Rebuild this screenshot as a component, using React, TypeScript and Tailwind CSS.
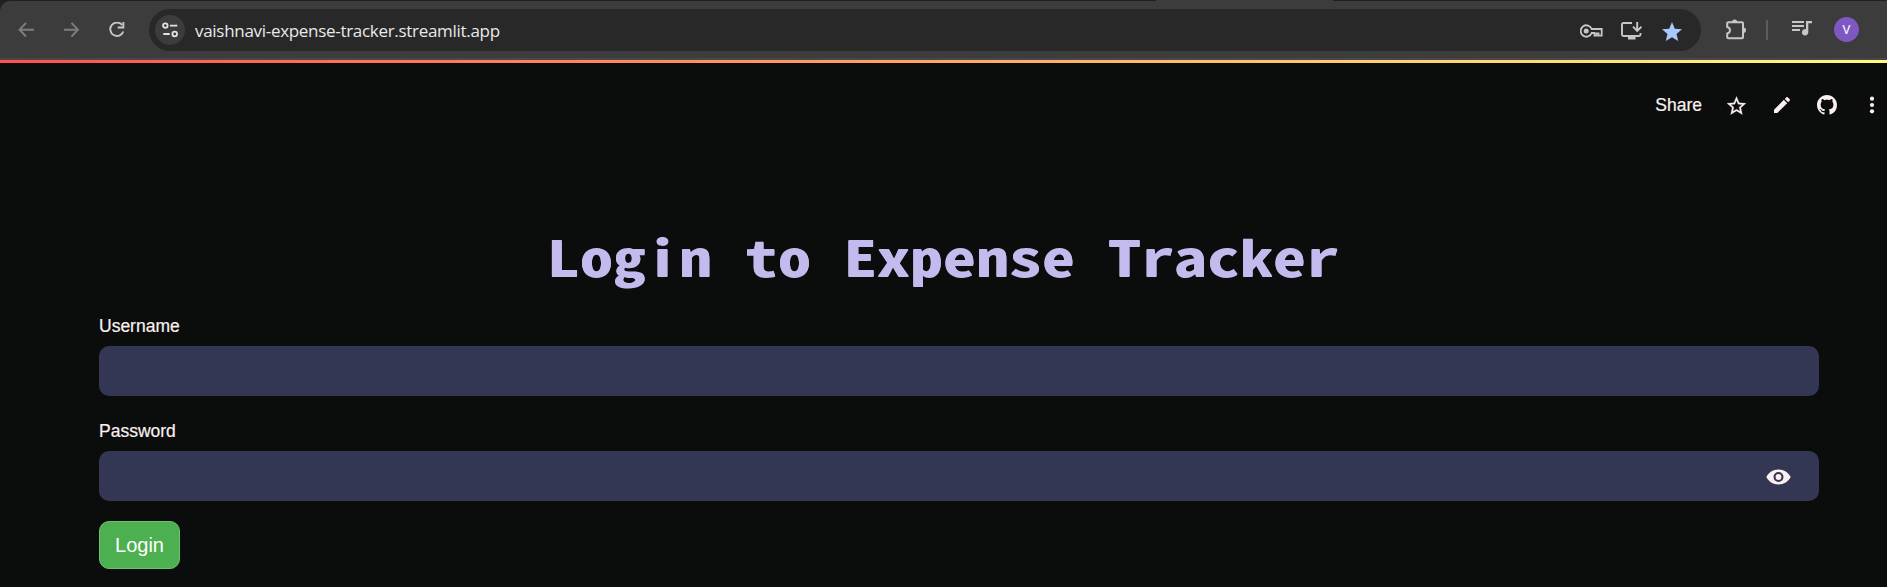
import type { ReactNode } from "react";

type IconProps = { className: string; box: string; children: ReactNode };

function Icon({ className, box, children }: IconProps) {
  return (
    <svg className={`block shrink-0 ${className}`} viewBox={box} fill="currentColor" aria-hidden="true">
      {children}
    </svg>
  );
}

function BrowserBar() {
  return (
    <header className="relative h-[60px] w-full bg-[#202020]">
      <div className="absolute top-0 left-[1156px] h-px w-[177px] bg-[#3c3c3c]" />
      <div className="flex h-full pt-px">
        <div className="flex w-full items-start rounded-tl-[10px] border-b-2 border-[#474747] bg-[#3c3c3c] pt-2">
          <div className="flex h-[42px] w-[149px] shrink-0 items-center">
            <Icon className="ml-[18px] h-4 w-4 text-[#7d7d7d]" box="0 0 16 16">
              <path d="M8 1 1.5 7.7 8 14.5M1.8 7.7H16" fill="none" stroke="currentColor" strokeWidth="1.9" />
            </Icon>
            <Icon className="ml-[30px] h-4 w-4 text-[#7d7d7d]" box="0 0 16 16">
              <path d="M7.5 1 14 7.7 7.5 14.5M0 7.7H14" fill="none" stroke="currentColor" strokeWidth="1.9" />
            </Icon>
            <Icon className="ml-[29px] h-4 w-4 text-[#c7c7c7]" box="0 0 16 16">
              <path d="M13.2 3A6.7 6.7 0 1 0 14.3 9.5" fill="none" stroke="currentColor" strokeWidth="1.9" />
              <path d="M15.3 0v6.5H8.7V4.6h4.7V0z" />
            </Icon>
          </div>
          <div className="flex h-[42px] w-[1552px] shrink-0 items-center rounded-full bg-[#282828] pl-[6px]">
            <div className="flex h-[30px] w-[30px] items-center justify-center rounded-full bg-[#3c3c3c]">
              <Icon className="h-4 w-4 text-[#e3e3e3]" box="0 0 16 16">
                <g fill="none" stroke="currentColor" strokeWidth="1.8">
                  <circle cx="3.3" cy="3.6" r="2.3" />
                  <path d="M8 3.6h7.3M1.3 12h6.4" />
                  <circle cx="12.7" cy="12" r="2.3" />
                </g>
              </Icon>
            </div>
            <span className="mt-[2px] ml-[10px] font-['Open_Sans','Noto_Sans',sans-serif] text-[17px] tracking-[-0.3px] text-[#e9e9e9]">
              vaishnavi-expense-tracker.streamlit.app
            </span>
            <div className="mr-[19px] ml-auto flex items-center">
              <Icon className="mt-[2px] h-[16px] w-[23px] text-[#c7c7c7]" box="0 0 23 16">
                <path
                  d="M11.7 6A5.7 5.7 0 1 0 11.7 10H14.5V12.7H16.5V10.5H18.5V12.7H21.7V6z"
                  fill="none"
                  stroke="currentColor"
                  strokeWidth="1.8"
                />
                <circle cx="6.2" cy="8" r="2.5" />
              </Icon>
              <Icon className="mt-[2px] ml-[18px] h-[20px] w-[21px] text-[#c7c7c7]" box="0 0 21 20">
                <path
                  d="M11 2H2.5Q1 2 1 3.5v10Q1 15 2.5 15h15.5Q19.5 15 19.5 13.5V12"
                  fill="none"
                  stroke="currentColor"
                  strokeWidth="1.9"
                />
                <path d="M7 15h7.5v3.5H7z" />
                <path d="M16.2 1v8.5M12 5.7l4.2 4.2 4.2-4.2" fill="none" stroke="currentColor" strokeWidth="1.9" />
              </Icon>
              <Icon className="mt-[3px] ml-[20px] h-[19px] w-[20px] text-[#a8c7fa]" box="2 2 20 19">
                <path d="M12 17.27 18.18 21l-1.64-7.03L22 9.24l-7.19-.61L12 2 9.19 8.63 2 9.24l5.46 4.73L5.82 21z" />
              </Icon>
            </div>
          </div>
          <div className="flex h-[42px] grow items-center">
            <Icon className="-mt-[2px] ml-[24px] h-[21px] w-[22px] text-[#c7c7c7]" box="0 0 22 21">
              <path
                d="M3.3 3.3H17Q18 3.3 18 4.3V18.2Q18 19.2 17 19.2H3.3Q2.2 19.2 2.2 18.2V14.6Q5 14 5 11.3T2.2 8V4.3Q2.2 3.3 3.3 3.3Z"
                fill="none"
                stroke="currentColor"
                strokeWidth="2"
              />
              <path d="M7 3a2.6 2.6 0 0 1 5.2 0zM18.3 8.5a2.7 2.7 0 0 1 0 5.4z" />
            </Icon>
            <div className="ml-[19px] h-[20px] w-[2px] bg-[#5d5d5d]" />
            <Icon className="-mt-[4px] ml-[24px] h-[16px] w-[20px] text-[#c7c7c7]" box="0 0 20 16">
              <path d="M0 1h12v1.9H0zM0 5h12v1.9H0zM0 9h8v1.9H0zM14 1h6v2.3h-3.7v9A3.2 3.2 0 1 1 14 9.2z" />
            </Icon>
            <div className="-mt-px ml-[22px] flex h-[25px] w-[25px] items-center justify-center rounded-full bg-[#7e57c2] font-['Roboto',sans-serif] text-[13px] text-white">
              V
            </div>
          </div>
        </div>
      </div>
    </header>
  );
}

function AppToolbar() {
  return (
    <nav className="flex h-[84px] items-center justify-end pr-[12px] text-[#faf0f0]">
      <span className="text-[17.5px] leading-[26px] [-webkit-text-stroke:0.2px_#faf0f0]">Share</span>
      <Icon className="ml-[25px] h-[19px] w-[19px]" box="2 2 20 19">
        <path
          d="m22 9.24-7.19-.62L12 2 9.19 8.63 2 9.24l5.46 4.73L5.82 21 12 17.27 18.18 21l-1.63-7.03L22 9.24zM12 15.4l-3.76 2.27 1-4.28-3.32-2.88 4.38-.38L12 6.1l1.71 4.04 4.38.38-3.32 2.88 1 4.28L12 15.4z"
          stroke="currentColor"
          strokeWidth="0.3"
        />
      </Icon>
      <Icon className="ml-[28px] h-[16px] w-[16px]" box="3 3 18 18">
        <path d="M3 17.25V21h3.75L17.81 9.94l-3.75-3.75L3 17.25zM20.71 7.04a1 1 0 0 0 0-1.41l-2.34-2.34a1 1 0 0 0-1.41 0l-1.83 1.83 3.75 3.75 1.83-1.83z" />
      </Icon>
      <Icon className="ml-[27px] h-[20px] w-[20px]" box="0 0 16 16">
        <path d="M8 0C3.58 0 0 3.58 0 8c0 3.54 2.29 6.53 5.47 7.59.4.07.55-.17.55-.38 0-.19-.01-.82-.01-1.49-2.01.37-2.53-.49-2.69-.94-.09-.23-.48-.94-.82-1.13-.28-.15-.68-.52-.01-.53.63-.01 1.08.58 1.23.82.72 1.21 1.87.87 2.33.66.07-.52.28-.87.51-1.07-1.78-.2-3.64-.89-3.64-3.95 0-.87.31-1.59.82-2.15-.08-.2-.36-1.02.08-2.12 0 0 .67-.21 2.2.82.64-.18 1.32-.27 2-.27s1.36.09 2 .27c1.53-1.04 2.2-.82 2.2-.82.44 1.1.16 1.92.08 2.12.51.56.82 1.27.82 2.15 0 3.07-1.87 3.75-3.65 3.95.29.25.54.73.54 1.48 0 1.07-.01 1.93-.01 2.2 0 .21.15.46.55.38A8.01 8.01 0 0 0 16 8c0-4.42-3.58-8-8-8z" />
      </Icon>
      <Icon className="ml-[32px] h-[18px] w-[6px]" box="0 0 6 18">
        <circle cx="3" cy="2.7" r="2.1" />
        <circle cx="3" cy="9" r="2.1" />
        <circle cx="3" cy="15.3" r="2.1" />
      </Icon>
    </nav>
  );
}

export default function App() {
  return (
    <div className="h-[587px] w-full overflow-hidden bg-[#0b0d0c] font-['Liberation_Sans',Arial,sans-serif]">
      <BrowserBar />
      <div className="h-[3px] bg-linear-to-r/srgb from-[#ff5151] to-[#fffb80]" />
      <AppToolbar />
      <main className="flex flex-col items-start pr-[68px] pl-[99px]">
        <h1 className="mt-[64px] flex h-[88px] w-full scale-y-[0.735] items-center justify-center pr-[32px] font-['Noto_Sans_Mono_CJK_SC','Liberation_Mono',monospace] text-[66px] leading-[88px] font-bold whitespace-nowrap text-[#c3bbed] [text-shadow:0_1px_0_#c3bbed]">
          Login to Expense Tracker
        </h1>
        <label className="mt-[14px] h-[33px] text-[17.5px] leading-[26px] text-[#faf0f0] [-webkit-text-stroke:0.2px_#faf0f0]" htmlFor="username">
          Username
        </label>
        <input id="username" className="block h-[50px] w-full rounded-[10px] bg-[#343754] px-4 text-white outline-none" />
        <label className="mt-[22px] h-[33px] text-[17.5px] leading-[26px] text-[#faf0f0] [-webkit-text-stroke:0.2px_#faf0f0]" htmlFor="password">
          Password
        </label>
        <div className="flex h-[50px] w-full items-center rounded-[10px] bg-[#343754] pr-[28px]">
          <input id="password" type="password" className="h-full grow bg-transparent px-4 text-white outline-none" />
          <Icon className="mt-px h-[16px] w-[25px] text-[#faf0f0]" box="0 0 25 16">
            <path
              fillRule="evenodd"
              d="M12.5.5C7 .5 2.5 3.5.3 8c2.2 4.5 6.7 7.5 12.2 7.5S22.5 12.5 24.7 8C22.5 3.5 18 .5 12.5.5ZM12.5 13a5 5 0 1 1 0-10 5 5 0 0 1 0 10Z"
            />
            <circle cx="12.5" cy="8" r="2.9" />
          </Icon>
        </div>
        <button className="mt-[20px] flex h-[48px] w-[81px] items-center justify-center rounded-[10px] border border-[#6fbf72] bg-[#4caf50] text-[20px] text-white">
          Login
        </button>
      </main>
    </div>
  );
}
